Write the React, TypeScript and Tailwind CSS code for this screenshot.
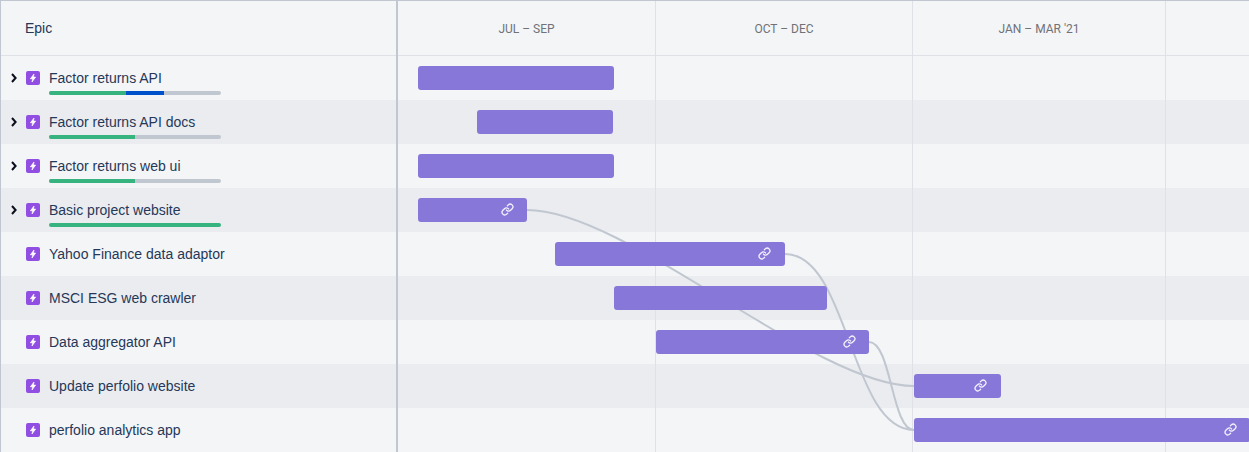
import { Link } from 'lucide-react';

type Epic = {
  name: string;
  expandable: boolean;
  done?: string;
  active?: string;
  bar: string;
  linked: boolean;
};

const EPICS: Epic[] = [
  { name: 'Factor returns API', expandable: true, done: 'w-[77px]', active: 'w-[38px]', bar: 'ml-[20px] w-[195.5px]', linked: false },
  { name: 'Factor returns API docs', expandable: true, done: 'w-[86px]', bar: 'ml-[78.7px] w-[136.8px]', linked: false },
  { name: 'Factor returns web ui', expandable: true, done: 'w-[86px]', bar: 'ml-[20px] w-[195.5px]', linked: false },
  { name: 'Basic project website', expandable: true, done: 'w-[172px]', bar: 'ml-[20px] w-[109px]', linked: true },
  { name: 'Yahoo Finance data adaptor', expandable: false, bar: 'ml-[157px] w-[229.7px]', linked: true },
  { name: 'MSCI ESG web crawler', expandable: false, bar: 'ml-[216px] w-[213px]', linked: false },
  { name: 'Data aggregator API', expandable: false, bar: 'ml-[258px] w-[213px]', linked: true },
  { name: 'Update perfolio website', expandable: false, bar: 'ml-[516px] w-[86.5px]', linked: true },
  { name: 'perfolio analytics app', expandable: false, bar: 'ml-[516px] w-[336px] shrink-0', linked: true },
];

const QUARTERS = [
  { label: 'Jul – Sep', width: 'w-[258px]' },
  { label: 'Oct – Dec', width: 'w-[257px]' },
  { label: "Jan – Mar '21", width: 'w-[253px]' },
];

function EpicIcon() {
  return (
    <svg width="14" height="14" viewBox="0 0 14 14" className="shrink-0">
      <rect width="14" height="14" rx="2" fill="#904ee2" />
      <path d="M8 3 4.4 7.8h2.3L6 11l3.6-4.9H7.3z" fill="#fff" stroke="#fff" strokeWidth="0.7" strokeLinejoin="round" />
    </svg>
  );
}

function Chevron() {
  return (
    <svg width="6" height="10" viewBox="0 0 6 10" className="absolute left-[9.5px] top-[17px]">
      <path d="M1 1l3.6 4L1 9" fill="none" stroke="#0b0f1a" strokeWidth="2" />
    </svg>
  );
}

function EpicRow({ epic, striped }: { epic: Epic; striped: boolean }) {
  return (
    <div className={`relative h-[44px] flex pl-[25px] pt-[15px] ${striped ? 'bg-[#ebecf0]' : 'bg-[#f4f5f7]'}`}>
      {epic.expandable && <Chevron />}
      <EpicIcon />
      <div className="ml-[9px] w-[172px]">
        <div className="text-sm leading-[14px] text-[#253858] whitespace-nowrap">{epic.name}</div>
        {epic.done && (
          <div className="mt-[6px] h-[4px] flex rounded-sm overflow-hidden bg-[#c1c7d0]">
            <div className={`bg-[#36b37e] ${epic.done}`} />
            {epic.active && <div className={`bg-[#0052cc] ${epic.active}`} />}
          </div>
        )}
      </div>
    </div>
  );
}

function TimelineRow({ epic, striped }: { epic: Epic; striped: boolean }) {
  return (
    <div className={`h-[44px] flex items-center ${striped ? 'bg-[#ebecf0]' : 'bg-[#f4f5f7]'}`}>
      <div className={`relative z-20 h-[24px] rounded-[3px] bg-[#8777d9] flex items-center justify-end pr-[13.5px] ${epic.bar}`}>
        {epic.linked && <Link size={13} strokeWidth={2.4} className="text-[#f4f2fc] -translate-y-px" />}
      </div>
    </div>
  );
}

export default function App() {
  return (
    <div className="w-[1249px] h-[452px] overflow-hidden flex bg-[#f4f5f7] border-t border-l border-[#c1c7d0] font-['Liberation_Sans',Arial,sans-serif]">
      <div className="w-[395px] shrink-0">
        <div className="h-[55px] border-b border-[#dfe1e6] flex items-center pl-[24px] text-sm text-[#253858]">Epic</div>
        {EPICS.map((epic, i) => (
          <EpicRow key={epic.name} epic={epic} striped={i % 2 === 1} />
        ))}
      </div>

      <div className="relative flex-1 min-w-0 border-l-2 border-[#c1c7d0]">
        <div className="h-[55px] border-b border-[#dfe1e6]" />
        {EPICS.map((epic, i) => (
          <TimelineRow key={epic.name} epic={epic} striped={i % 2 === 1} />
        ))}

        {/* quarter columns sit over the row stripes, under the bars */}
        <div className="absolute inset-0 flex pointer-events-none">
          {QUARTERS.map((q) => (
            <div key={q.label} className={`${q.width} shrink-0 border-r border-[#dfe1e6] h-full`}>
              <div className="h-[55px] flex items-center justify-center text-[12px] uppercase text-[#707278] font-['Roboto','Liberation_Sans',sans-serif]">{q.label}</div>
            </div>
          ))}
        </div>

        {/* dependency curves */}
        <svg className="absolute left-0 top-0 z-10" width="851" height="451" fill="none" stroke="#c1c7d0" strokeWidth="2">
          <path d="M129 209C229 209 416 385 516 385" />
          <path d="M387 253C451 253 452 429 516 429" />
          <path d="M471 341C493.5 341 493.5 429 516 429" />
        </svg>
      </div>
    </div>
  );
}
